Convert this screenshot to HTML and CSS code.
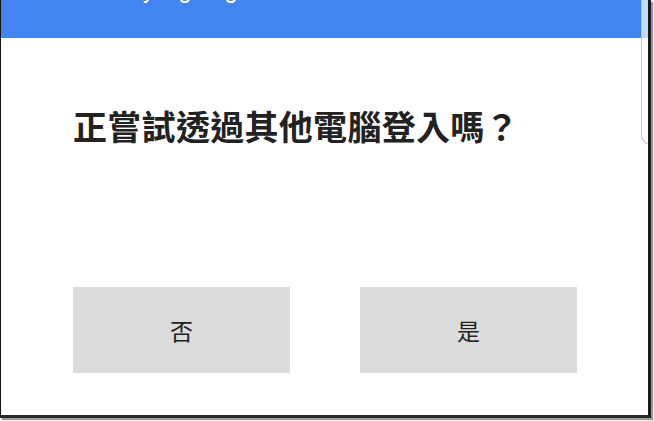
FILE: index.html
```html
<!DOCTYPE html>
<html lang="zh-Hant">
<head>
    <meta charset="UTF-8">
    <meta name="viewport" content="width=device-width, initial-scale=1.0">
    <title>登入確認</title>
    <link rel="stylesheet" href="styles.css">
</head>
<body>
    <div id="frame">
        <div class="topbar">
            <div class="topbar-title">Verify signing</div>
        </div>
        <div class="content">
            <h1 class="question">正嘗試透過其他電腦登入嗎？</h1>
            <div class="answers">
                <button class="answer">否</button>
                <button class="answer">是</button>
            </div>
        </div>
        <!-- edge panel handle on the right side -->
        <div class="edge-handle"></div>
    </div>
</body>
</html>
```

FILE: styles.css
```css
* {
    margin: 0;
    padding: 0;
    box-sizing: border-box;
}

body {
    width: 654px;
    height: 421px;
    background: #fff;
    font-family: "Noto Sans CJK TC", "Noto Sans", sans-serif;
    overflow: hidden;
}

#frame {
    position: relative;
    width: 651px;
    height: 418px;
    border-left: 1px solid #111;
    border-right: 3px solid #1a1a1a;
    border-bottom: 3px solid #2a2a2a;
    box-shadow: 2px 2px 1px #9a9a9a;
    overflow: hidden;
}

.topbar {
    height: 38px;
    background: #4285f2;
    overflow: hidden;
}

.topbar-title {
    margin-top: -24px;
    padding-left: 92px;
    color: #fff;
    font-size: 24px;
    line-height: 28px;
    font-family: "Roboto", sans-serif;
}

.content {
    padding: 68px 0 0 72px;
}

.question {
    font-size: 34px;
    font-weight: 700;
    line-height: 40px;
    color: #222;
    letter-spacing: 0.3px;
}

.answers {
    display: flex;
    gap: 70px;
    margin-top: 141px;
}

.answer {
    width: 217px;
    height: 86px;
    border: none;
    background: #dcdcdc;
    color: #222;
    font-family: "Noto Sans CJK TC", sans-serif;
    font-size: 23px;
}

.edge-handle {
    position: absolute;
    top: -2px;
    right: -4px;
    width: 11px;
    height: 147px;
    background: rgba(255, 255, 255, 0.7);
    border-left: 1px solid #c4c4c4;
    border-bottom: 1px solid #c4c4c4;
    border-bottom-left-radius: 10px;
}
```
